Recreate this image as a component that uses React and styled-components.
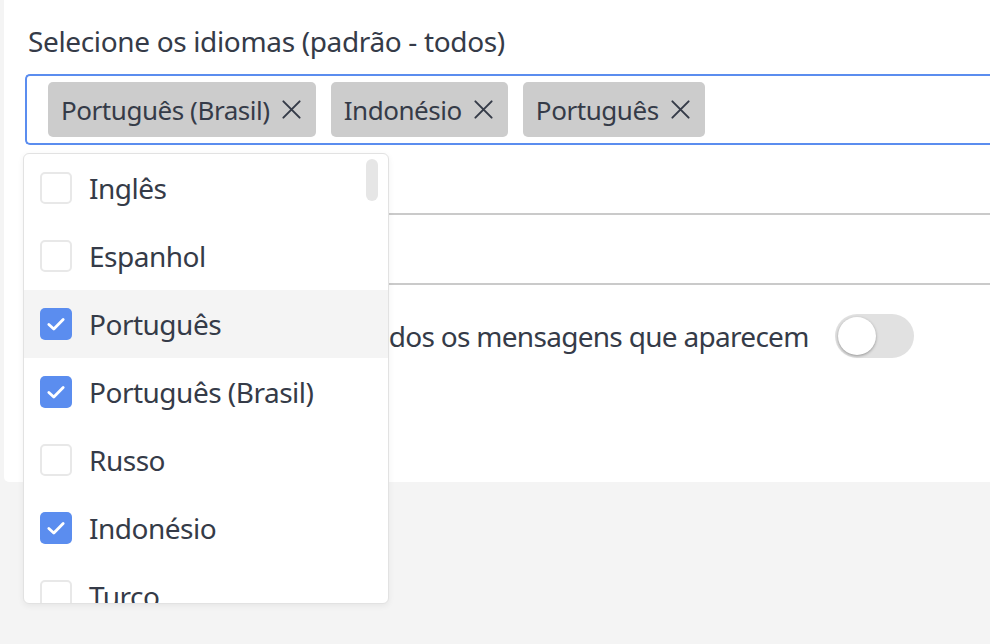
import React from "react";
import styled, { createGlobalStyle } from "styled-components";

const GlobalStyle = createGlobalStyle`
  html, body { margin: 0; padding: 0; background: #f4f4f4; }
  body { font-family: "Noto Sans", "Open Sans", sans-serif; color: #353b48; overflow: hidden; }
  * { box-sizing: border-box; }
`;

const Page = styled.div`
  width: 990px;
  height: 644px;
  padding-left: 4px;
  background: #f4f4f4;
`;

const Card = styled.div`
  background: #ffffff;
  height: 482px;
  width: 1000px;
  border-bottom-left-radius: 5px;
  padding: 22px 0 0 21px;
`;

const Label = styled.div`
  font-size: 28px;
  letter-spacing: -0.35px;
  line-height: 38px;
  padding-left: 3px;
  margin-bottom: 14px;
`;

const Field = styled.div`
  position: relative;
`;

const TagInput = styled.div`
  display: flex;
  align-items: center;
  gap: 15px;
  height: 71px;
  border: 2px solid #5b8def;
  border-right: none;
  border-radius: 5px 0 0 5px;
  padding: 0 21px;
`;

const Tag = styled.div`
  display: flex;
  align-items: center;
  gap: 11px;
  height: 55px;
  padding: 0 14px 0 13px;
  background: #cccccc;
  border-radius: 5px;
  font-size: 26px;
  letter-spacing: -0.45px;
`;

const CloseIcon = () => (
  <svg width="21" height="21" viewBox="0 0 22 22" fill="none" stroke="#353b48" strokeWidth="2.1" strokeLinecap="round">
    <path d="M2.5 2.5 L19.5 19.5 M19.5 2.5 L2.5 19.5" />
  </svg>
);

const LineField = styled.div`
  height: 70px;
  border-bottom: 2px solid #cacaca;
`;

const ToggleRow = styled.div`
  display: flex;
  align-items: center;
  gap: 26px;
  height: 102px;
  font-size: 28px;
  letter-spacing: -0.7px;
`;

const Toggle = styled.div`
  position: relative;
  flex-shrink: 0;
  width: 79px;
  height: 44px;
  border-radius: 22px;
  background: #e1e1e1;
`;

const Knob = styled.div`
  position: absolute;
  left: 3px;
  top: 3px;
  width: 38px;
  height: 38px;
  border-radius: 50%;
  background: #ffffff;
  box-shadow: 0 1px 3px rgba(0, 0, 0, 0.35);
`;

const Dropdown = styled.div`
  position: absolute;
  top: calc(100% + 8px);
  left: -2px;
  width: 366px;
  height: 451px;
  background: #ffffff;
  border: 1px solid #e2e2e2;
  border-radius: 6px;
  box-shadow: 0 2px 6px rgba(0, 0, 0, 0.06);
  overflow: hidden;
  z-index: 5;
`;

const Thumb = styled.div`
  position: absolute;
  right: 10px;
  top: 5px;
  width: 12px;
  height: 42px;
  border-radius: 6px;
  background: #e6e6e6;
`;

const Option = styled.div`
  display: flex;
  align-items: center;
  gap: 17px;
  height: 68px;
  padding-left: 16px;
  font-size: 28px;
  letter-spacing: -0.5px;
  background: ${(p) => (p.$active ? "#f4f4f4" : "transparent")};
`;

const Box = styled.div`
  width: 32px;
  height: 32px;
  border-radius: 5px;
  flex-shrink: 0;
  display: flex;
  align-items: center;
  justify-content: center;
  background: ${(p) => (p.$checked ? "#5b8def" : "#ffffff")};
  border: ${(p) => (p.$checked ? "none" : "2px solid #e8e8e8")};
`;

const Check = () => (
  <svg width="22" height="22" viewBox="0 0 20 20" fill="none" stroke="#ffffff" strokeWidth="2.6" strokeLinecap="round" strokeLinejoin="round">
    <path d="M3.5 10.5 L8 14.5 L16.5 6" />
  </svg>
);

const options = [
  { name: "Inglês", checked: false },
  { name: "Espanhol", checked: false },
  { name: "Português", checked: true, active: true },
  { name: "Português (Brasil)", checked: true },
  { name: "Russo", checked: false },
  { name: "Indonésio", checked: true },
  { name: "Turco", checked: false },
];

const tags = ["Português (Brasil)", "Indonésio", "Português"];

export default function App() {
  return (
    <Page>
      <GlobalStyle />
      <Card>
        <Label>Selecione os idiomas (padrão - todos)</Label>
        <Field>
          <TagInput>
            {tags.map((t) => (
              <Tag key={t}>
                {t}
                <CloseIcon />
              </Tag>
            ))}
          </TagInput>
          <Dropdown>
            {options.map((o) => (
              <Option key={o.name} $active={o.active}>
                <Box $checked={o.checked}>{o.checked && <Check />}</Box>
                {o.name}
              </Option>
            ))}
            <Thumb />
          </Dropdown>
        </Field>
        <LineField />
        <LineField />
        <ToggleRow>
          Traduzir automaticamente todos os mensagens que aparecem
          <Toggle>
            <Knob />
          </Toggle>
        </ToggleRow>
      </Card>
    </Page>
  );
}
